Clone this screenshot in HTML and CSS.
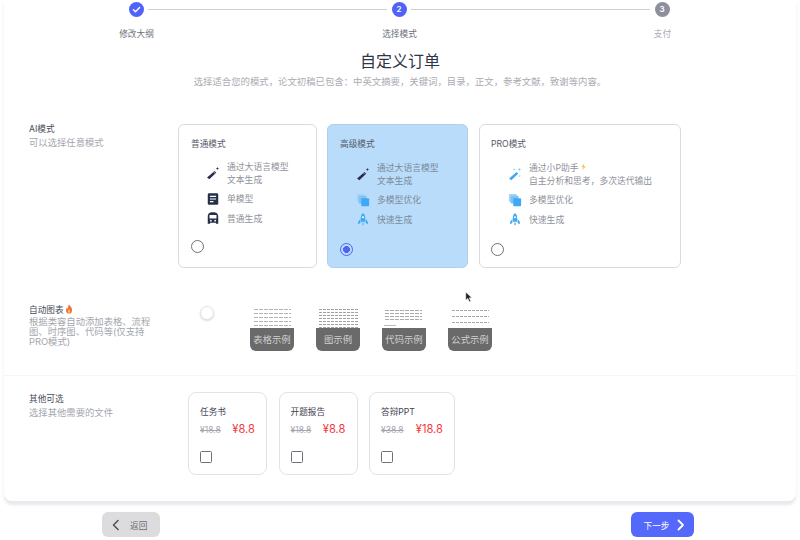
FILE: index.html
```html
<!DOCTYPE html>
<html lang="zh-CN">
<head>
<meta charset="utf-8">
<title>自定义订单</title>
<link rel="stylesheet" href="styles.css">
</head>
<body>
<div class="page">
  <main class="panel">
    <div class="steps">
      <div class="track">
        <span class="dot done"><svg viewBox="0 0 16 16" width="11" height="11"><path d="M3.500 8.300l3 3 6-6.300" fill="none" stroke="#fff" stroke-width="2" stroke-linecap="round" stroke-linejoin="round"/></svg></span>
        <span class="line"></span>
        <span class="dot active">2</span>
        <span class="line"></span>
        <span class="dot todo">3</span>
      </div>
      <div class="step-labels">
        <span>修改大纲</span>
        <span>选择模式</span>
        <span class="muted-step">支付</span>
      </div>
    </div>

    <h1 class="title">自定义订单</h1>
    <p class="subtitle">选择适合您的模式，论文初稿已包含：中英文摘要，关键词，目录，正文，参考文献，致谢等内容。</p>

    <section class="row row-modes">
      <div class="label">
        <div class="label-title">AI模式</div>
        <div class="label-desc">可以选择任意模式</div>
      </div>
      <div class="modes">
        <article class="mode mode-basic">
          <div class="mode-title">普通模式</div>
          <ul class="features">
            <li><svg class="ico" viewBox="0 0 16 16"><path d="M1.200 13L9.800 5.600l1.900 2-7.900 7.600z" fill="#27304a"/><path d="M8.600 6.600l1.900 2" stroke="#fff" stroke-width=".7"/><path d="M13 1l.6 1.300 1.300.6-1.300.5-.6 1.300-.5-1.300-1.300-.5 1.300-.6z" fill="#27304a"/></svg><span>通过大语言模型<br>文本生成</span></li>
            <li><svg class="ico" viewBox="0 0 16 16"><rect x="2" y="1.500" width="12" height="13" rx="1.500" fill="#27304a"/><path d="M4.500 5h7M4.500 8h7M4.500 11h4" stroke="#fff" stroke-width="1.400"/></svg><span>单模型</span></li>
            <li><svg class="ico" viewBox="0 0 16 16"><path d="M2 7c0-4 2-5.500 6-5.500S14 3 14 7v7.500h-2.500l-.5-1H5l-.5 1H2z" fill="#27304a"/><rect x="4" y="4.500" width="8" height="4" rx=".6" fill="#fff"/><circle cx="5.500" cy="11" r="1" fill="#fff"/><circle cx="10.500" cy="11" r="1" fill="#fff"/></svg><span>普通生成</span></li>
          </ul>
          <span class="radio"></span>
        </article>

        <article class="mode mode-adv">
          <div class="mode-title">高级模式</div>
          <ul class="features">
            <li><svg class="ico" viewBox="0 0 16 16"><path d="M1.200 13L9.800 5.600l1.900 2-7.900 7.600z" fill="#27304a"/><path d="M8.600 6.600l1.900 2" stroke="#b8dcf9" stroke-width=".7"/><path d="M13 1l.6 1.300 1.300.6-1.300.5-.6 1.300-.5-1.300-1.300-.5 1.300-.6z" fill="#27304a"/></svg><span>通过大语言模型<br>文本生成</span></li>
            <li><svg class="ico" viewBox="0 0 16 16"><rect x="1" y="1" width="9" height="9" rx="1" fill="#a5d4f7"/><rect x="3" y="3" width="9" height="9" rx="1" fill="#7cc2f5"/><rect x="6" y="6" width="9" height="9" rx="1" fill="#3fa9f5"/></svg><span>多模型优化</span></li>
            <li><svg class="ico" viewBox="0 0 16 16"><path d="M8 1c2 1.800 2.500 4 2.500 6.500V11h-5V7.500C5.500 5 6 2.800 8 1z" fill="#3fa9f5"/><circle cx="8" cy="6" r="1.200" fill="#fff"/><path d="M5 8L2.500 11v3L5 12.500zM11 8l2.500 3v3L11 12.500z" fill="#3fa9f5"/><path d="M7 12h2v3H7z" fill="#7cc2f5"/></svg><span>快速生成</span></li>
          </ul>
          <span class="radio checked"></span>
        </article>

        <article class="mode mode-pro">
          <div class="mode-title">PRO模式</div>
          <ul class="features">
            <li><svg class="ico" viewBox="0 0 16 16"><path d="M1.200 13L9.800 5.600l1.900 2-7.900 7.600z" fill="#3fa9f5"/><path d="M13 1l.6 1.300 1.300.6-1.300.5-.6 1.300-.5-1.300-1.300-.5 1.300-.6zM7 1.500l.4.900.9.400-.9.400-.4.900-.4-.9-.9-.4.900-.4zM13.500 9l.4.900.9.400-.9.400-.4.900-.4-.9-.9-.4.900-.4z" fill="#7cc2f5"/></svg><span>通过小P助手<svg class="bolt" viewBox="0 0 10 10"><path d="M6 0L1.500 5.500H4.500L3.500 10 8.500 4H5.500z" fill="#f7c95c"/></svg><br>自主分析和思考，多次迭代输出</span></li>
            <li><svg class="ico" viewBox="0 0 16 16"><rect x="1" y="1" width="9" height="9" rx="1" fill="#a5d4f7"/><rect x="3" y="3" width="9" height="9" rx="1" fill="#7cc2f5"/><rect x="6" y="6" width="9" height="9" rx="1" fill="#3fa9f5"/></svg><span>多模型优化</span></li>
            <li><svg class="ico" viewBox="0 0 16 16"><path d="M8 1c2 1.800 2.500 4 2.500 6.500V11h-5V7.500C5.500 5 6 2.800 8 1z" fill="#3fa9f5"/><circle cx="8" cy="6" r="1.200" fill="#fff"/><path d="M5 8L2.500 11v3L5 12.500zM11 8l2.500 3v3L11 12.500z" fill="#3fa9f5"/><path d="M7 12h2v3H7z" fill="#7cc2f5"/></svg><span>快速生成</span></li>
          </ul>
          <span class="radio"></span>
        </article>
      </div>
    </section>

    <section class="row row-chart">
      <div class="label">
        <div class="label-title">自动图表<svg class="flame" viewBox="0 0 10 12"><path d="M5 0c.5 2 3.800 3.500 3.800 7.200A3.800 4.500 0 0 1 1.200 7.200C1.200 5.500 2.200 4.500 2.800 4c0 1 .4 1.500 1 1.700C3.800 3.800 4 1.500 5 0z" fill="#f0703a"/><path d="M5 6c.4 1 1.600 1.500 1.600 3A1.600 1.800 0 0 1 3.400 9C3.400 8 4.600 7.200 5 6z" fill="#fbc26a"/></svg></div>
        <div class="label-desc chart-desc">根据类容自动添加表格、流程图、时序图、代码等(仅支持PRO模式)</div>
      </div>
      <span class="toggle"></span>
      <div class="samples">
        <div class="sample sample-table"><span class="sample-tag">表格示例</span></div>
        <div class="sample sample-figure"><span class="sample-tag">图示例</span></div>
        <div class="sample sample-code"><span class="sample-tag">代码示例</span></div>
        <div class="sample sample-formula"><span class="sample-tag">公式示例</span></div>
      </div>
    </section>

    <section class="row row-extra">
      <div class="label extra-label">
        <div class="label-title">其他可选</div>
        <div class="label-desc">选择其他需要的文件</div>
      </div>
      <div class="extras">
        <article class="extra extra-a">
          <div class="extra-name">任务书</div>
          <div class="prices"><s>¥18.8</s><b>¥8.8</b></div>
          <span class="check"></span>
        </article>
        <article class="extra extra-a">
          <div class="extra-name">开题报告</div>
          <div class="prices"><s>¥18.8</s><b>¥8.8</b></div>
          <span class="check"></span>
        </article>
        <article class="extra extra-b">
          <div class="extra-name">答辩PPT</div>
          <div class="prices"><s>¥38.8</s><b>¥18.8</b></div>
          <span class="check"></span>
        </article>
      </div>
    </section>
  </main>

  <footer class="actions">
    <button class="btn btn-back"><svg viewBox="0 0 12 12" width="12" height="12"><path d="M8 1.500L3.500 6 8 10.500" fill="none" stroke="#4a4f5c" stroke-width="1.500" stroke-linecap="round" stroke-linejoin="round"/></svg><span>返回</span></button>
    <button class="btn btn-next"><span>下一步</span><svg viewBox="0 0 12 12" width="12" height="12"><path d="M3.500 1.500L8 6l-4.500 4.500" fill="none" stroke="#fff" stroke-width="1.800" stroke-linecap="round" stroke-linejoin="round"/></svg></button>
  </footer>

  <svg class="cursor" viewBox="0 0 10 14" width="8" height="12"><path d="M1 1v10l2.500-2.300L5.500 13l1.600-.8L5.200 8H8.500z" fill="#222" stroke="#fff" stroke-width=".5"/></svg>
</div>
</body>
</html>
```

FILE: styles.css
```css
* { box-sizing: border-box; }
html, body { margin: 0; padding: 0; }
body {
  background: #fff;
  font-family: Inter, "Noto Sans CJK SC", sans-serif;
  font-size: 9.33px;
  color: #3a4050;
}
.page { position: relative; width: 800px; height: 540px; overflow: hidden; }

.panel {
  height: 501px;
  margin: 0 4px;
  padding-top: 1.500px;
  background: #fff;
  border-radius: 0 0 8px 8px;
  box-shadow: 0 4px 3px rgba(60, 70, 100, .12);
}

.steps { height: 37.500px; }
.track { display: flex; align-items: center; padding: 0 126.500px 0 124.500px; }
.dot {
  flex: none;
  width: 15px;
  height: 15px;
  border-radius: 50%;
  display: flex;
  align-items: center;
  justify-content: center;
  color: #fff;
  font-size: 8px;
  font-weight: 600;
}
.done, .active { background: #4f63f6; }
.todo { background: #8d8f9b; }
.line { flex: 1; height: 1px; margin: 0 4.500px; background: #cfd0d4; }
.step-labels { display: grid; grid-template-columns: repeat(3, 263px); justify-content: center; margin: 10px 0 0 -1px; font-size: 8.670px; text-align: center; line-height: 14px; color: #6d7079; }
.muted-step { color: #a8aab1; }

.title { margin: 10px 0 0; text-align: center; font-size: 16px; line-height: 24px; font-weight: 400; color: #2f3546; }
.subtitle { margin: 2px 0 0; text-align: center; font-size: 9.400px; line-height: 14px; color: #a9abb2; }

.row { display: flex; padding-left: 25px; }
.label { flex: none; width: 149px; }
.label-title { font-size: 8.670px; line-height: 13px; color: #454a58; }
.label-desc { line-height: 13px; color: #a4a6ae; }

.row-modes { margin-top: 35px; }
.row-modes .label { margin-top: -1px; }
.modes { display: flex; }
.mode {
  display: flex;
  flex-direction: column;
  height: 144px;
  padding: 12px 12px 0;
  border: 1px solid #d9dbe0;
  border-radius: 6px;
  background: #fff;
}
.mode-basic { width: 139px; margin-right: 10px; }
.mode-adv { width: 141px; margin-right: 11px; background: #b8dcf9; border-color: #b0cfe9; }
.mode-pro { width: 202px; padding-left: 11px; }
.mode-title { font-size: 8.670px; line-height: 14px; color: #555a68; }
.features { list-style: none; margin: 9px 0 0; padding: 0 0 0 15px; font-size: 8.800px; color: #8f929b; line-height: 13px; }
.mode-adv .features { margin-top: 10px; padding-left: 16px; color: #7c8a9a; }
.mode-pro .features { margin-top: 10px; padding-left: 17px; }
.features li { display: flex; align-items: center; gap: 7px; margin-bottom: 5.500px; white-space: nowrap; }
.ico { flex: none; width: 14px; height: 14px; }
.bolt { width: 7px; height: 8px; margin-left: 1px; }
.radio {
  width: 13px;
  height: 13px;
  margin-top: 9.500px;
  border: 1px solid #6f7178;
  border-radius: 50%;
  background: #fff;
}
.mode-adv .radio, .mode-pro .radio { margin-top: 11.500px; }
.radio.checked {
  border-color: #4f63f6;
  background: radial-gradient(circle, #4f63f6 0 3.200px, transparent 3.700px);
}

.row-chart { margin-top: 36px; height: 72px; border-bottom: 1px solid #f6f6f8; }
.chart-desc { width: 126px; line-height: 10px; }
.row-chart .label-title { line-height: 13px; }
.flame { width: 8px; height: 10px; margin-left: 1px; vertical-align: -1px; }
.toggle {
  flex: none;
  width: 14px;
  height: 14px;
  margin: 2px 0 0 22px;
  border: 1px solid #e3e4e8;
  border-radius: 50%;
  background: #fff;
  box-shadow: 0 1px 2px rgba(0, 0, 0, .15);
}
.samples { display: flex; gap: 22px; margin: 3px 0 0 36px; }
.sample {
  display: flex;
  align-items: flex-end;
  width: 44px;
  height: 44px;
  border-radius: 6px;
}
.sample-table { background:
  repeating-linear-gradient(90deg, #fff 0 1px, transparent 1px 5px) 3px 2px / 38px 20px no-repeat,
  repeating-linear-gradient(#b3b3b3 0 1px, #fff 1px 4px) 3px 2px / 38px 20px no-repeat; }
.sample-figure { background:
  repeating-linear-gradient(90deg, #fff 0 1px, transparent 1px 4px) 2px 2px / 40px 20px no-repeat,
  repeating-linear-gradient(#a0a0a0 0 1px, #fff 1px 3px) 2px 2px / 40px 20px no-repeat; }
.sample-code { background:
  repeating-linear-gradient(90deg, #fff 0 1px, transparent 1px 5px) 2px 3px / 38px 12px no-repeat,
  repeating-linear-gradient(#aaa 0 1px, #fff 1px 3px) 2px 3px / 38px 12px no-repeat,
  linear-gradient(#bbb, #bbb) 2px 18px / 12px 1px no-repeat; }
.sample-formula { background:
  repeating-linear-gradient(90deg, #fff 0 1px, transparent 1px 4px) 3px 3px / 38px 20px no-repeat,
  repeating-linear-gradient(#a8a8a8 0 1px, #fff 1px 6px) 3px 3px / 38px 20px no-repeat; }
.sample-tag {
  width: 100%;
  height: 23px;
  border-radius: 0 0 6px 6px;
  background: #6a6a6a;
  color: #d0d0d0;
  font-size: 9.330px;
  line-height: 23px;
  text-align: center;
}

.row-extra { margin-top: 16px; }
.extra-label { width: 159px; margin-top: 1px; }
.extras { display: flex; gap: 11.500px; }
.extra {
  height: 82.500px;
  padding: 13px 11px 0;
  border: 1px solid #e2e3e7;
  border-radius: 8px;
  background: #fff;
}
.extra-a { width: 79px; }
.extra-b { width: 86px; }
.extra-name { font-size: 8.670px; line-height: 13px; color: #3f4452; }
.prices { display: flex; align-items: baseline; justify-content: space-between; margin-top: 2px; line-height: 17px; white-space: nowrap; }
.prices s { color: #a4a6ad; font-size: 8.500px; }
.prices b { color: #f5383b; font-size: 11.200px; font-weight: 400; }
.check { display: block; width: 12px; height: 12px; margin-top: 11.500px; border: 1px solid #6f7178; border-radius: 1.500px; }

.actions { display: flex; justify-content: space-between; padding: 11px 106px 0 102px; }
.btn {
  display: flex;
  align-items: center;
  height: 25px;
  border: 0;
  border-radius: 6px;
  font: inherit;
  font-size: 8.670px;
}
.btn-back { width: 58px; padding: 0 0 0 8px; gap: 8px; background: #dcdcde; color: #6a6d75; }
.btn-next { width: 63px; padding: 0 0 0 12.500px; gap: 6px; background: #5468fb; color: #fff; }

.cursor { position: absolute; left: 465px; top: 291px; }
```
